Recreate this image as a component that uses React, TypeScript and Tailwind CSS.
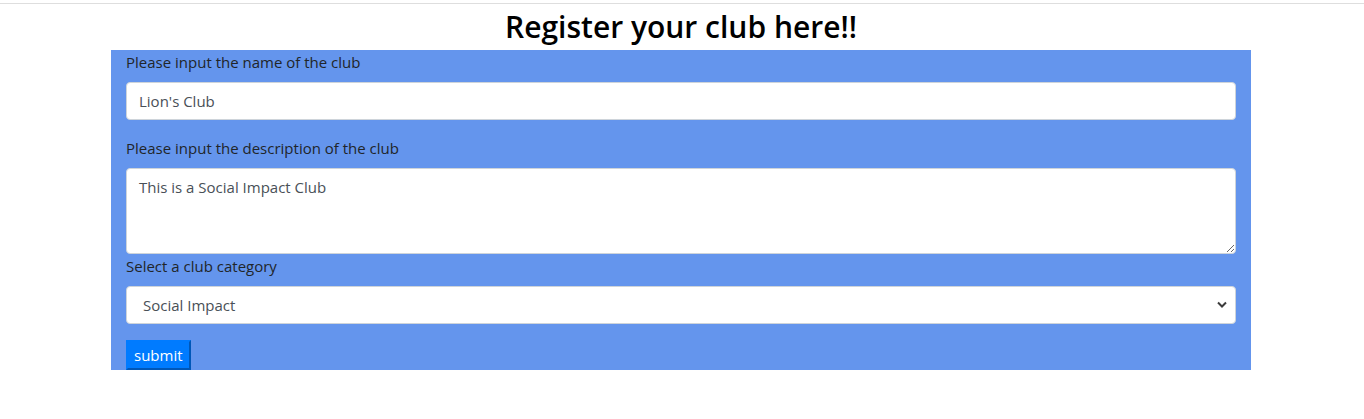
import { useState } from 'react';

export default function App() {
  const [name, setName] = useState("Lion's Club");
  const [desc, setDesc] = useState('This is a Social Impact Club');
  const [category, setCategory] = useState('Social Impact');

  return (
    <div className="min-h-[419px] bg-white text-[#212529] font-['Open_Sans',sans-serif]">
      <div className="h-[3px]" />
      <div className="border-t border-[#dedede]" />
      <div className="w-[1362px]">
        <h1 className="text-center text-[30px] font-semibold leading-[46px] text-black">Register your club here!!</h1>

        <form className="mx-auto w-[1140px] bg-[#6495ed] px-[15px] text-[15px]">
          <div className="mb-4">
            <label className="mb-2 block leading-6">Please input the name of the club</label>
            <input
              value={name}
              onChange={(e) => setName(e.target.value)}
              className="block h-[38px] w-full rounded border border-[#ced4da] bg-white px-3 text-[#495057] outline-none"
            />
          </div>

          <div>
            <label className="mb-2 block leading-6">Please input the description of the club</label>
            <textarea
              value={desc}
              onChange={(e) => setDesc(e.target.value)}
              className="block h-[86px] w-full rounded border border-[#ced4da] bg-white px-3 py-[6px] leading-6 text-[#495057] outline-none"
            />
          </div>

          <div className="mb-4">
            <label className="mb-2 block leading-6">Select a club category</label>
            <div className="relative">
              <select
                value={category}
                onChange={(e) => setCategory(e.target.value)}
                className="block h-[38px] w-full appearance-none rounded border border-[#ced4da] bg-white pl-4 pr-8 text-[#495057] outline-none"
              >
                <option>Social Impact</option>
                <option>Sports</option>
                <option>Arts</option>
                <option>Technology</option>
              </select>
              <svg className="pointer-events-none absolute right-[9px] top-[15px]" width="10" height="7" viewBox="0 0 10 7">
                <path d="M1 1.5 L5 5.5 L9 1.5" fill="none" stroke="#3c3c3c" strokeWidth="2" />
              </svg>
            </div>
          </div>

          <button
            type="button"
            className="block h-[30px] border-2 border-t-[#007bff] border-l-[#007bff] border-r-[#0057b8] border-b-[#0057b8] bg-[#007bff] px-[6px] text-[15px] leading-none text-white"
          >
            submit
          </button>
        </form>
      </div>
    </div>
  );
}
